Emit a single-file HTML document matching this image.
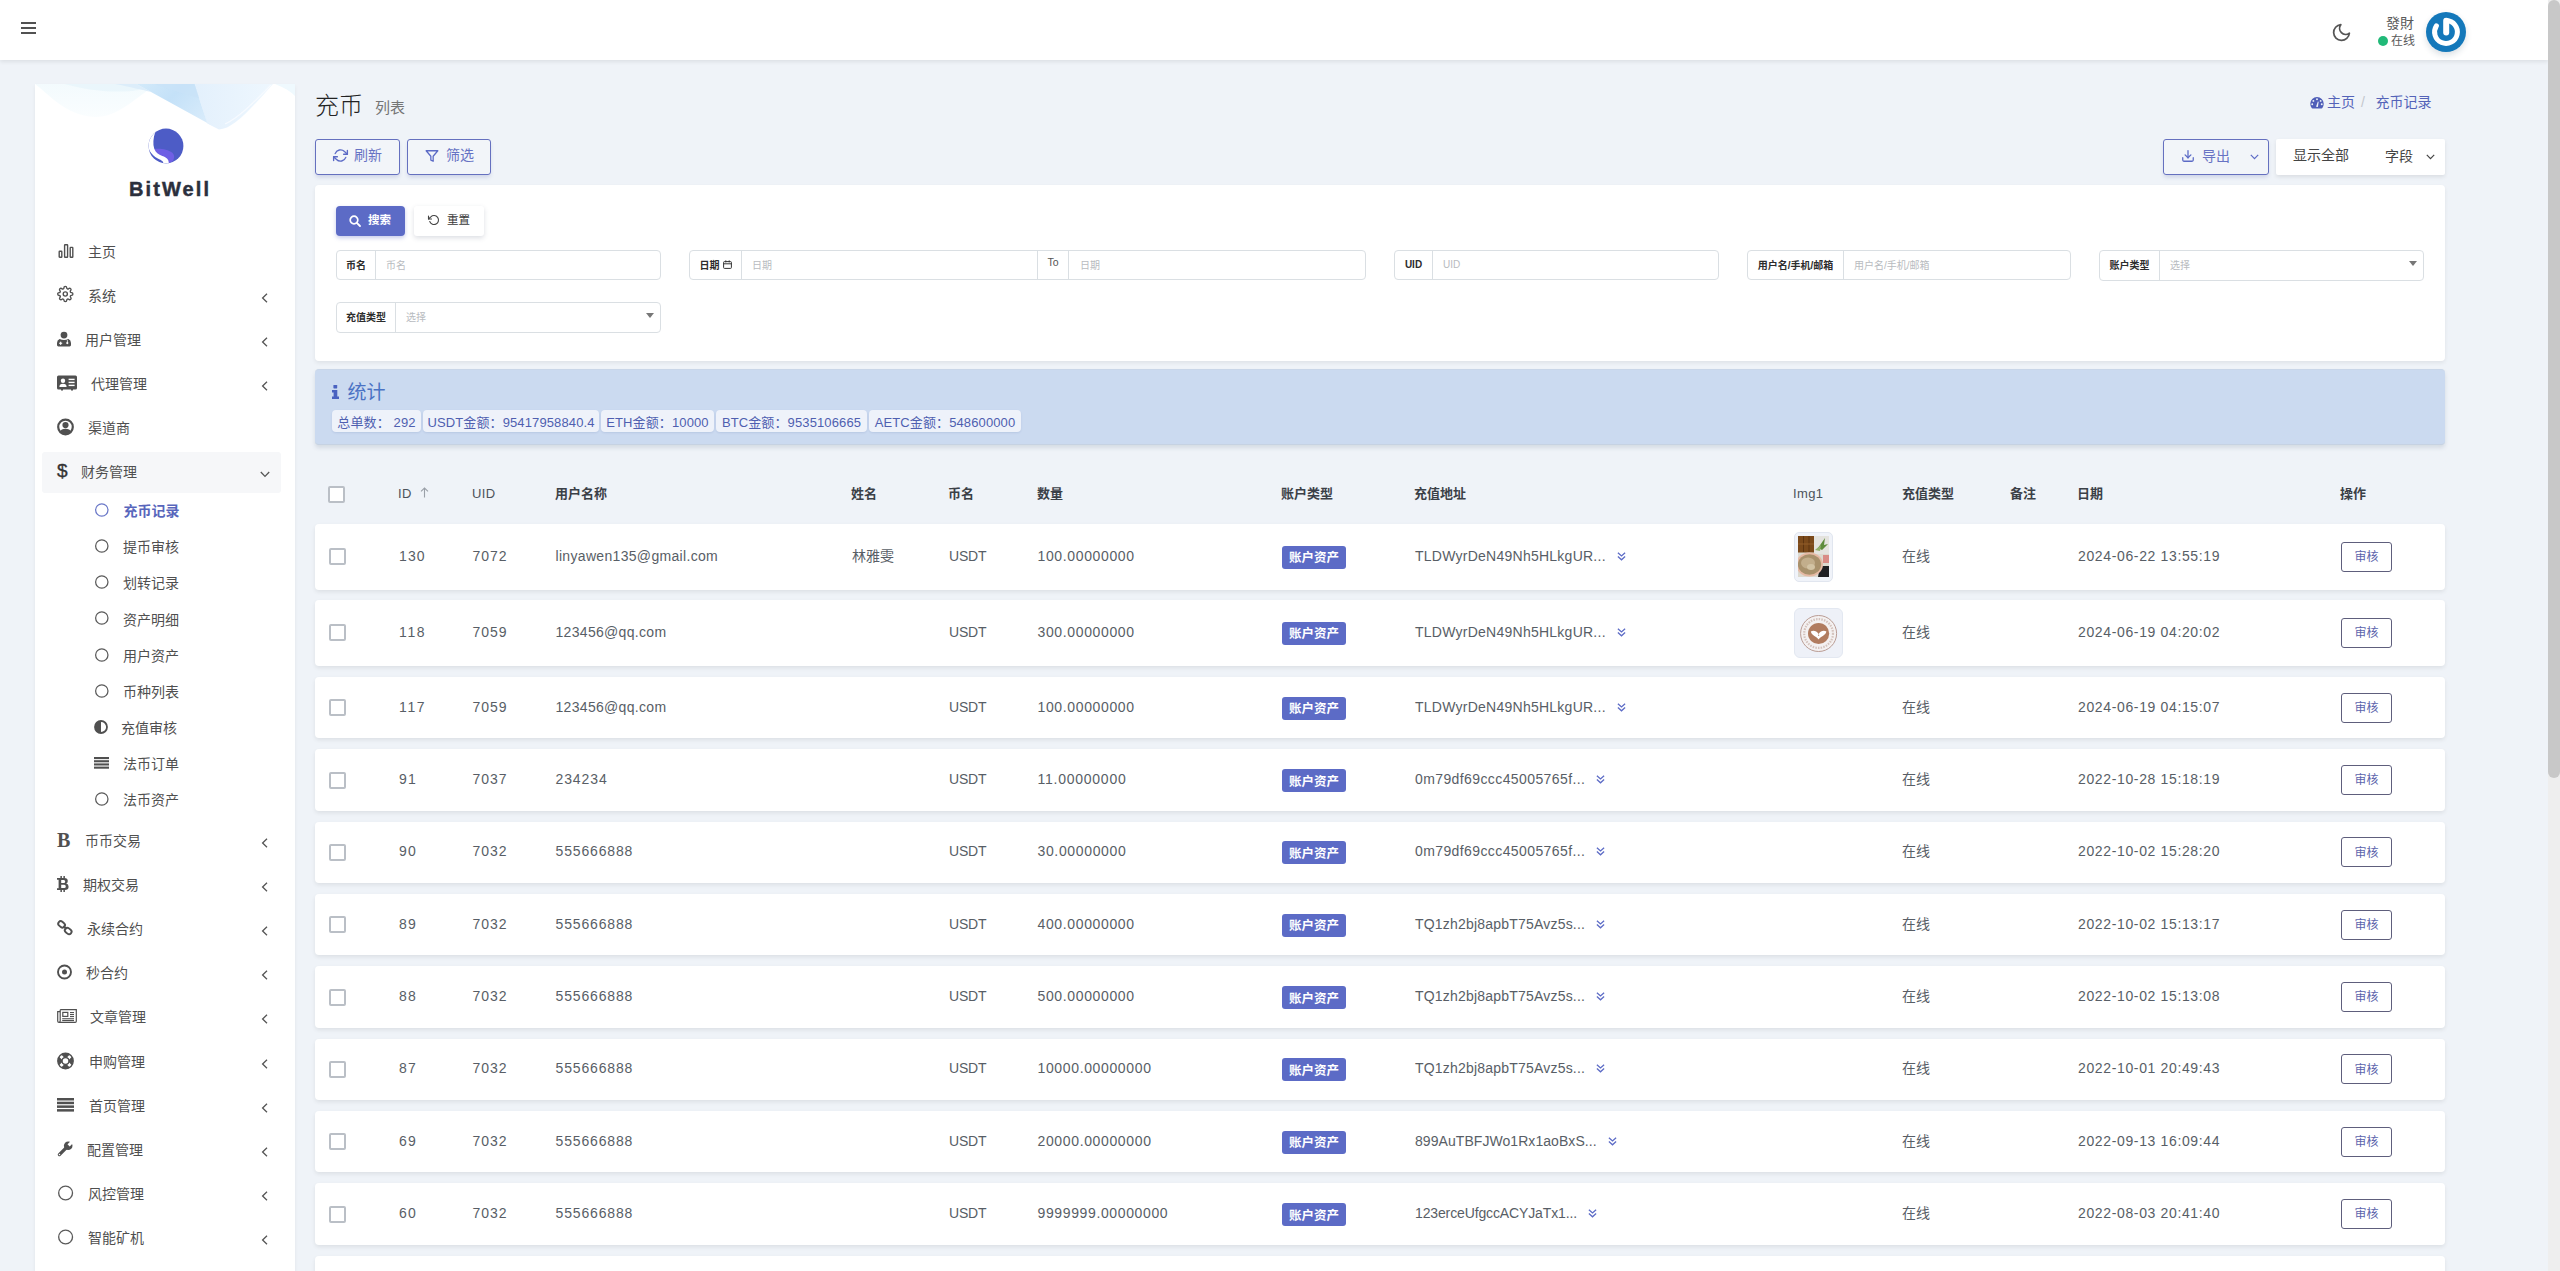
<!DOCTYPE html>
<html lang="zh-CN">
<head>
<meta charset="utf-8">
<title>充币记录</title>
<style>
*{box-sizing:border-box;margin:0;padding:0}
html,body{width:2560px;height:1271px;overflow:hidden}
body{background:#eff3f8;font-family:"Liberation Sans","Noto Sans CJK SC",sans-serif;font-size:14px;color:#414750;position:relative}
svg{display:block;overflow:visible}
.a{position:absolute}
.t{position:absolute;white-space:nowrap;line-height:20px;transform:translateY(-50%)}
#nav{position:absolute;left:0;top:0;width:2548px;height:60px;background:#fff;box-shadow:0 2px 4px 0 rgba(0,0,0,.08);z-index:5}
#sbtrack{position:absolute;left:2548px;top:0;width:12px;height:1271px;background:#eeeeee;z-index:9}
#sbthumb{position:absolute;left:2548px;top:0;width:12px;height:778px;background:#c8c8c8;border-radius:6px;z-index:10}
#side{position:absolute;left:35px;top:84px;width:260px;height:1200px;background:#fff;box-shadow:0 2px 4px 0 rgba(0,0,0,.06);overflow:hidden}
.m{font-size:14px;color:#4f4f4f}
.btn{position:absolute;border-radius:3px;font-size:14px;white-space:nowrap}
.btn-o{border:1px solid #6570bf;color:#6773c4;background:rgba(255,255,255,.22);box-shadow:0 3px 4px -1px rgba(88,100,170,.24)}
.panel{position:absolute;background:#fff;border-radius:4px;box-shadow:0 2px 4px 0 rgba(0,0,0,.07)}
.ig{position:absolute;height:30px;border:1px solid #dadfe3;border-radius:4px;background:#fff;font-size:10px}
.ig .lb{position:absolute;left:0;top:0;padding-bottom:2px;height:28px;display:flex;align-items:center;justify-content:center;font-weight:bold;color:#2c2c2c;border-right:1px solid #dadfe3;white-space:nowrap}
.ig .ph{position:absolute;top:0;padding-bottom:2px;height:28px;display:flex;align-items:center;color:#b8bbc0;white-space:nowrap}
.ig .caret{position:absolute;right:6px;top:11px;width:0;height:0;border-left:4px solid transparent;border-right:4px solid transparent;border-top:5px solid #777}
.th{position:absolute;white-space:nowrap;line-height:20px;transform:translateY(-50%);top:494px;font-size:13px;font-weight:bold;color:#3b4047}
.th.l{font-weight:normal;color:#4d535b;letter-spacing:.4px;top:493.5px}
.row{position:absolute;left:315px;width:2130px;background:#fff;border-radius:4px;box-shadow:0 2px 4px 0 rgba(0,0,0,.08)}
.row .c{position:absolute;top:calc(50% - 1px);transform:translateY(-50%);font-size:14px;color:#585e66;white-space:nowrap;line-height:20px}
.cb{position:absolute;width:17px;height:17px;border:2px solid #babfc6;border-radius:2px;background:#fff}
.badge{position:absolute;left:967px;width:64px;height:23px;border-radius:3px;background:#5c6bc6;color:#fff;font-size:12.5px;font-weight:bold;display:flex;align-items:center;justify-content:center;top:50%;margin-top:-11px;padding-bottom:1px}
.act{position:absolute;left:2026px;width:51px;height:30px;border:1px solid #5e5e7c;border-radius:3px;color:#5c64ac;font-size:12px;display:flex;align-items:center;justify-content:center;top:50%;margin-top:-15px;padding-bottom:2.5px;background:#fff}
.dd{position:absolute;top:50%;margin-top:-5px}
.stat{position:absolute;top:410px;height:22px;background:#eef2fa;border-radius:4px;font-size:13px;letter-spacing:.12px;color:#4f5fb0;display:flex;align-items:center;justify-content:center;white-space:nowrap;box-shadow:0 1px 2px rgba(80,100,160,.15)}
</style>
</head>
<body>
<div id="nav"><div class="a" style="left:21px;top:22px;width:14.5px;height:2px;background:#525252"></div><div class="a" style="left:21px;top:27px;width:14.5px;height:2px;background:#525252"></div><div class="a" style="left:21px;top:32px;width:14.5px;height:2px;background:#525252"></div><div class="a" style="left:2330.5px;top:21.5px"><svg width="21" height="21" viewBox="0 0 24 24" style=""><path d="M21 12.79A9 9 0 1 1 11.21 3 7 7 0 0 0 21 12.79z" fill="none" stroke="#555" stroke-width="2" stroke-linejoin="round"/></svg></div><div class="t" style="left:2386px;top:23px;font-size:14px;color:#5a5a5a;font-family:'Liberation Sans','Noto Sans CJK TC',sans-serif">發財</div><div class="a" style="left:2378px;top:36px;width:10px;height:10px;border-radius:50%;background:#21b978"></div><div class="t" style="left:2391px;top:41px;font-size:12px;color:#5a5a5a">在线</div><div class="a" style="left:2426px;top:12px;width:40px;height:40px;border-radius:50%;background:#1478ba;box-shadow:0 3px 6px rgba(30,60,90,.16)"><svg width="40" height="40" viewBox="0 0 40 40" style=""><path d="M20.4 8.6A11.4 11.4 0 1 1 10.4 13.8" fill="none" stroke="#fff" stroke-width="5" stroke-linecap="round"/><path d="M20.2 8.8V20.4" stroke="#fff" stroke-width="6" stroke-linecap="round"/></svg></div></div>
<div id="side"><svg class="a" style="left:0;top:0" width="260" height="60" viewBox="0 0 260 60">
<defs>
<linearGradient id="wg1" x1="0" y1="0" x2="1" y2="0.55"><stop offset="0" stop-color="#d3eafa"/><stop offset=".45" stop-color="#c4e1f8"/><stop offset="1" stop-color="#d9ecfb"/></linearGradient>
<linearGradient id="wg2" x1="0" y1="0" x2="1" y2="0"><stop offset="0" stop-color="#e3f0fc"/><stop offset="1" stop-color="#eef7fe"/></linearGradient>
<linearGradient id="wg3" x1="0" y1="0" x2="0" y2="1"><stop offset="0" stop-color="#e9f7fc"/><stop offset="1" stop-color="#f6fcfe"/></linearGradient>
</defs>
<path d="M0 0C12 8 30 32 60 33C84 33 100 14 122 0Z" fill="url(#wg3)" opacity=".55"/>
<path d="M30 0C50 6 80 10 104 6L101 0Z" fill="#e2f3fa" opacity=".55"/>
<path d="M200 0H260V12C252 4 246 3 240 0Z" fill="#eff9fe"/>
<path d="M159 0L166 20L172 39L184 45.6C198 45 214 27 238 0Z" fill="url(#wg2)"/>
<path d="M80 0C95 3 108 6 116 8L101.5 0Z" fill="#dcedfa"/>
<path d="M101.5 0H159.5L166 20L172.5 39.5L184 45.6L176 41Z" fill="url(#wg1)"/>
<path d="M120 0H159.5L164 14C150 10 135 6 120 0Z" fill="#c9e3f8" opacity=".7"/>
<path d="M190 40C205 33 222 15 236 1" fill="none" stroke="#f7fbff" stroke-width="1.2" opacity=".9"/>
</svg><div class="a" style="left:112.5px;top:44.4px"><svg width="36" height="36" viewBox="0 0 36 36"><defs><clipPath id="lc"><circle cx="18" cy="18" r="17.4"/></clipPath></defs>
<circle cx="18" cy="18" r="17.4" fill="#4d5cc6"/>
<g clip-path="url(#lc)">
<path d="M6.5 21C12 20 20 21.5 24 24.5C26.4 26.6 26.8 29 25 33L20 36C20.5 31.5 18 30 14 28.5C10 27 7 25 6.5 21Z" fill="#6f5fe4"/>
<path d="M7.2 4.2C5.2 10 4.8 16 6.2 20.6C7.6 24.6 10.4 26.6 14.4 28C18.6 29.6 21 31.4 20.8 35.6L15 36C16.2 33.6 13.6 32.2 9.8 30.4C3.8 27.4 0 22 0 16C0 10 3 7 7.2 4.2Z" fill="#fff"/>
</g></svg></div><div class="t" style="left:94px;top:105px;font-size:20px;font-weight:bold;color:#2b303d;letter-spacing:2.1px;-webkit-text-stroke:.45px #2b303d">BitWell</div><div class="a" style="left:7px;top:368.4px;width:239px;height:40.4px;background:#f6f7f9;border-radius:3px"></div><div class="a" style="left:22.6px;top:166.7px;transform:translateY(-50%)"><svg width="16" height="14" viewBox="0 0 16 14" style=""><g fill="none" stroke="#505050" stroke-width="1.4" stroke-linejoin="round"><rect x="1.2" y="7.2" width="2.6" height="6" rx=".5"/><rect x="6.6" y=".8" width="3" height="12.4" rx=".5"/><rect x="12.2" y="3.4" width="2.6" height="9.8" rx=".5"/></g></svg></div><div class="t m" style="left:53px;top:168px">主页</div><div class="a" style="left:22px;top:210.2px;transform:translateY(-50%)"><svg width="16.6" height="16.6" viewBox="0 0 24 24" style=""><g fill="none" stroke="#505050" stroke-width="2" stroke-linecap="round" stroke-linejoin="round"><circle cx="12" cy="12" r="3"/><path d="M19.4 15a1.65 1.65 0 0 0 .33 1.82l.06.06a2 2 0 0 1 0 2.83 2 2 0 0 1-2.83 0l-.06-.06a1.65 1.65 0 0 0-1.82-.33 1.65 1.65 0 0 0-1 1.51V21a2 2 0 0 1-2 2 2 2 0 0 1-2-2v-.09A1.65 1.65 0 0 0 9 19.4a1.65 1.65 0 0 0-1.82.33l-.06.06a2 2 0 0 1-2.83 0 2 2 0 0 1 0-2.83l.06-.06a1.65 1.65 0 0 0 .33-1.82 1.65 1.65 0 0 0-1.51-1H3a2 2 0 0 1-2-2 2 2 0 0 1 2-2h.09A1.65 1.65 0 0 0 4.6 9a1.65 1.65 0 0 0-.33-1.82l-.06-.06a2 2 0 0 1 0-2.83 2 2 0 0 1 2.83 0l.06.06a1.65 1.65 0 0 0 1.82.33H9a1.65 1.65 0 0 0 1-1.51V3a2 2 0 0 1 2-2 2 2 0 0 1 2 2v.09a1.65 1.65 0 0 0 1 1.51 1.65 1.65 0 0 0 1.82-.33l.06-.06a2 2 0 0 1 2.83 0 2 2 0 0 1 0 2.83l-.06.06a1.65 1.65 0 0 0-.33 1.82V9a1.65 1.65 0 0 0 1.51 1H21a2 2 0 0 1 2 2 2 2 0 0 1-2 2h-.09a1.65 1.65 0 0 0-1.51 1z"/></g></svg></div><div class="t m" style="left:53px;top:212px">系统</div><div class="a" style="left:226px;top:208.8px"><svg width="7" height="10" viewBox="0 0 7 10" style=""><path d="M6 .8 1.6 5 6 9.2" fill="none" stroke="#555" stroke-width="1.3"/></svg></div><div class="a" style="left:22px;top:255px;transform:translateY(-50%)"><svg width="14" height="15" viewBox="0 0 14 15" style=""><g fill="#505050"><circle cx="7" cy="3.6" r="3.4"/><path d="M2.6 7.6 Q7 9.6 11.4 7.6 Q14 8.6 14 11.5 V13.6 Q14 15 12.6 15 H1.4 Q0 15 0 13.6 V11.5 Q0 8.6 2.6 7.6Z"/></g><g fill="#fff"><rect x="3.1" y="10.2" width="1.1" height="3.2"/><rect x="2.1" y="11.2" width="3.1" height="1.1"/><circle cx="10.3" cy="11.6" r="1.1"/><rect x="9.9" y="8.6" width=".8" height="2.4"/></g></svg></div><div class="t m" style="left:50px;top:256px">用户管理</div><div class="a" style="left:226px;top:252.8px"><svg width="7" height="10" viewBox="0 0 7 10" style=""><path d="M6 .8 1.6 5 6 9.2" fill="none" stroke="#555" stroke-width="1.3"/></svg></div><div class="a" style="left:22px;top:299px;transform:translateY(-50%)"><svg width="20" height="15" viewBox="0 0 20 15" style=""><path fill="#505050" d="M1.5 0H18.5A1.5 1.5 0 0 1 20 1.5V12.5A1.5 1.5 0 0 1 18.5 14H16V15H14V14H6V15H4V14H1.5A1.5 1.5 0 0 1 0 12.5V1.5A1.5 1.5 0 0 1 1.5 0Z"/><g fill="#fff"><circle cx="6" cy="5.2" r="2.2"/><path d="M2.4 11.4Q2.4 8.2 6 8.2Q9.6 8.2 9.6 11.4Z"/><rect x="11.6" y="3.2" width="6" height="1.4"/><rect x="11.6" y="6.2" width="6" height="1.4"/><rect x="11.6" y="9.2" width="6" height="1.4"/></g></svg></div><div class="t m" style="left:56px;top:300px">代理管理</div><div class="a" style="left:226px;top:296.8px"><svg width="7" height="10" viewBox="0 0 7 10" style=""><path d="M6 .8 1.6 5 6 9.2" fill="none" stroke="#555" stroke-width="1.3"/></svg></div><div class="a" style="left:22px;top:343px;transform:translateY(-50%)"><svg width="17" height="17" viewBox="0 0 17 17" style=""><circle cx="8.5" cy="8.5" r="7.3" fill="none" stroke="#505050" stroke-width="2.2"/><circle cx="8.5" cy="6.6" r="3.1" fill="#505050"/><path fill="#505050" d="M2.8 13.4Q4.2 10.2 8.5 10.2Q12.8 10.2 14.2 13.4Q11.8 16.2 8.5 16.2Q5.2 16.2 2.8 13.4Z"/></svg></div><div class="t m" style="left:53px;top:344px">渠道商</div><div class="a" style="left:22px;top:387px;transform:translateY(-50%)"><span style="display:block;font:normal 19px/19px 'Liberation Sans',sans-serif;color:#333;-webkit-text-stroke:.35px #333;margin-top:-1px">$</span></div><div class="t m" style="left:46px;top:388px">财务管理</div><div class="a" style="left:225px;top:387px"><svg width="10" height="7" viewBox="0 0 10 7" style=""><path d="M.8 1 5 5.4 9.2 1" fill="none" stroke="#555" stroke-width="1.3"/></svg></div><div class="a" style="left:22px;top:756px;transform:translateY(-50%)"><span style="display:block;font:bold 20px/20px 'Liberation Serif',serif;color:#505050">B</span></div><div class="t m" style="left:50px;top:757px">币币交易</div><div class="a" style="left:226px;top:753.8px"><svg width="7" height="10" viewBox="0 0 7 10" style=""><path d="M6 .8 1.6 5 6 9.2" fill="none" stroke="#555" stroke-width="1.3"/></svg></div><div class="a" style="left:22px;top:800px;transform:translateY(-50%)"><svg width="12" height="16" viewBox="0 0 12 16" style=""><g fill="#505050"><rect x="3.4" y="0" width="1.5" height="2.4"/><rect x="6.4" y="0" width="1.5" height="2.4"/><rect x="3.4" y="13.6" width="1.5" height="2.4"/><rect x="6.4" y="13.6" width="1.5" height="2.4"/></g><path fill="#505050" d="M0 2H7.4Q10.8 2 10.8 5Q10.8 7 9.2 7.6Q11.6 8.2 11.6 10.8Q11.6 14 7.8 14H0V12.2H1.6V3.8H0ZM4.2 3.9V7H6.8Q8.2 7 8.2 5.4Q8.2 3.9 6.8 3.9ZM4.2 8.8V12.1H7.2Q8.8 12.1 8.8 10.4Q8.8 8.8 7.2 8.8Z" fill-rule="evenodd"/></svg></div><div class="t m" style="left:48px;top:801px">期权交易</div><div class="a" style="left:226px;top:797.8px"><svg width="7" height="10" viewBox="0 0 7 10" style=""><path d="M6 .8 1.6 5 6 9.2" fill="none" stroke="#555" stroke-width="1.3"/></svg></div><div class="a" style="left:22px;top:844px;transform:translateY(-50%)"><svg width="16" height="16" viewBox="0 0 16 16" style=""><g fill="none" stroke="#505050" stroke-width="1.9"><rect x="-3.6" y="-2.5" width="7.2" height="5" rx="2.5" transform="translate(4.6 4.4) rotate(40)"/><rect x="-3.6" y="-2.5" width="7.2" height="5" rx="2.5" transform="translate(11.2 11) rotate(40)"/></g><path d="M6.4 6 L9.6 9.2" stroke="#505050" stroke-width="1.9"/></svg></div><div class="t m" style="left:52px;top:845px">永续合约</div><div class="a" style="left:226px;top:841.8px"><svg width="7" height="10" viewBox="0 0 7 10" style=""><path d="M6 .8 1.6 5 6 9.2" fill="none" stroke="#555" stroke-width="1.3"/></svg></div><div class="a" style="left:22px;top:888px;transform:translateY(-50%)"><svg width="15" height="15" viewBox="0 0 15 15" style=""><circle cx="7.5" cy="7.5" r="6.5" fill="none" stroke="#505050" stroke-width="1.9"/><circle cx="7.5" cy="7.5" r="2.5" fill="#505050"/></svg></div><div class="t m" style="left:51px;top:889px">秒合约</div><div class="a" style="left:226px;top:885.8px"><svg width="7" height="10" viewBox="0 0 7 10" style=""><path d="M6 .8 1.6 5 6 9.2" fill="none" stroke="#555" stroke-width="1.3"/></svg></div><div class="a" style="left:22px;top:932px;transform:translateY(-50%)"><svg width="20" height="14" viewBox="0 0 20 14" style=""><g fill="none" stroke="#505050" stroke-width="1.2"><path d="M3.2 .7H19.3V12.2Q19.3 13.3 18.2 13.3H2Q.7 13.3 .7 12V2.6H3.2"/><path d="M3.2 .7V12Q3.2 13.3 2 13.3"/><rect x="5.8" y="3.4" width="5" height="4"/></g><g fill="#505050"><rect x="13" y="3" width="4" height="1.1"/><rect x="13" y="5" width="4" height="1.1"/><rect x="13" y="7" width="4" height="1.1"/><rect x="5.2" y="9.2" width="11.8" height="1.1"/><rect x="5.2" y="11" width="11.8" height="1.1"/></g></svg></div><div class="t m" style="left:55px;top:933px">文章管理</div><div class="a" style="left:226px;top:929.8px"><svg width="7" height="10" viewBox="0 0 7 10" style=""><path d="M6 .8 1.6 5 6 9.2" fill="none" stroke="#555" stroke-width="1.3"/></svg></div><div class="a" style="left:22px;top:977px;transform:translateY(-50%)"><svg width="17" height="17" viewBox="0 0 17 17" style=""><circle cx="8.5" cy="8.5" r="5.6" fill="none" stroke="#505050" stroke-width="4.2"/><g stroke="#fff" stroke-width="3"><path d="M2.4 2.4 5.9 5.9M14.6 2.4 11.1 5.9M2.4 14.6 5.9 11.1M14.6 14.6 11.1 11.1"/></g><circle cx="8.5" cy="8.5" r="7.7" fill="none" stroke="#505050" stroke-width="1.4"/><circle cx="8.5" cy="8.5" r="3.4" fill="none" stroke="#505050" stroke-width="1.3"/></svg></div><div class="t m" style="left:54px;top:978px">申购管理</div><div class="a" style="left:226px;top:974.8px"><svg width="7" height="10" viewBox="0 0 7 10" style=""><path d="M6 .8 1.6 5 6 9.2" fill="none" stroke="#555" stroke-width="1.3"/></svg></div><div class="a" style="left:22px;top:1021px;transform:translateY(-50%)"><svg width="17" height="14" viewBox="0 0 17 14" style=""><g fill="#505050"><rect x="0" y="0" width="17" height="2.5"/><rect x="0" y="3.7" width="17" height="2.5"/><rect x="0" y="7.4" width="17" height="2.5"/><rect x="0" y="11.1" width="17" height="2.5"/></g></svg></div><div class="t m" style="left:54px;top:1022px">首页管理</div><div class="a" style="left:226px;top:1018.8px"><svg width="7" height="10" viewBox="0 0 7 10" style=""><path d="M6 .8 1.6 5 6 9.2" fill="none" stroke="#555" stroke-width="1.3"/></svg></div><div class="a" style="left:22px;top:1065px;transform:translateY(-50%)"><svg width="16" height="16" viewBox="0 0 16 16" style=""><path d="M2.4 13.6 9.6 6.4" stroke="#505050" stroke-width="3.3" stroke-linecap="round"/><circle cx="11.2" cy="4.8" r="4.3" fill="#505050"/><path d="M11.6 4.4 16.5 -.5" stroke="#fff" stroke-width="3.1"/><circle cx="2.5" cy="13.5" r=".75" fill="#fff"/></svg></div><div class="t m" style="left:52px;top:1066px">配置管理</div><div class="a" style="left:226px;top:1062.8px"><svg width="7" height="10" viewBox="0 0 7 10" style=""><path d="M6 .8 1.6 5 6 9.2" fill="none" stroke="#555" stroke-width="1.3"/></svg></div><div class="a" style="left:22.799999999999997px;top:1109px;transform:translateY(-50%)"><svg width="15.2" height="15.2" viewBox="0 0 15.2 15.2" style=""><circle cx="7.6" cy="7.6" r="6.925" fill="none" stroke="#5a5a5a" stroke-width="1.35"/></svg></div><div class="t m" style="left:53px;top:1110px">风控管理</div><div class="a" style="left:226px;top:1106.8px"><svg width="7" height="10" viewBox="0 0 7 10" style=""><path d="M6 .8 1.6 5 6 9.2" fill="none" stroke="#555" stroke-width="1.3"/></svg></div><div class="a" style="left:22.799999999999997px;top:1153px;transform:translateY(-50%)"><svg width="15.2" height="15.2" viewBox="0 0 15.2 15.2" style=""><circle cx="7.6" cy="7.6" r="6.925" fill="none" stroke="#5a5a5a" stroke-width="1.35"/></svg></div><div class="t m" style="left:53px;top:1154px">智能矿机</div><div class="a" style="left:226px;top:1150.8px"><svg width="7" height="10" viewBox="0 0 7 10" style=""><path d="M6 .8 1.6 5 6 9.2" fill="none" stroke="#555" stroke-width="1.3"/></svg></div><div class="a" style="left:59.8px;top:426.0px;transform:translateY(-50%)"><svg width="13.6" height="13.6" viewBox="0 0 13.6 13.6" style=""><circle cx="6.8" cy="6.8" r="6.175" fill="none" stroke="#6a78c8" stroke-width="1.25"/></svg></div><div class="t m" style="left:88.4px;top:427.09999999999997px;font-weight:bold;color:#5866bc">充币记录</div><div class="a" style="left:60px;top:462.1px;transform:translateY(-50%)"><svg width="13.6" height="13.6" viewBox="0 0 13.6 13.6" style=""><circle cx="6.8" cy="6.8" r="6.175" fill="none" stroke="#5a5a5a" stroke-width="1.25"/></svg></div><div class="t m" style="left:88px;top:463.20000000000005px;">提币审核</div><div class="a" style="left:60px;top:498.30000000000007px;transform:translateY(-50%)"><svg width="13.6" height="13.6" viewBox="0 0 13.6 13.6" style=""><circle cx="6.8" cy="6.8" r="6.175" fill="none" stroke="#5a5a5a" stroke-width="1.25"/></svg></div><div class="t m" style="left:88px;top:499.4000000000001px;">划转记录</div><div class="a" style="left:60px;top:534.4px;transform:translateY(-50%)"><svg width="13.6" height="13.6" viewBox="0 0 13.6 13.6" style=""><circle cx="6.8" cy="6.8" r="6.175" fill="none" stroke="#5a5a5a" stroke-width="1.25"/></svg></div><div class="t m" style="left:88px;top:535.5px;">资产明细</div><div class="a" style="left:60px;top:570.5px;transform:translateY(-50%)"><svg width="13.6" height="13.6" viewBox="0 0 13.6 13.6" style=""><circle cx="6.8" cy="6.8" r="6.175" fill="none" stroke="#5a5a5a" stroke-width="1.25"/></svg></div><div class="t m" style="left:88px;top:571.6px;">用户资产</div><div class="a" style="left:60px;top:606.7px;transform:translateY(-50%)"><svg width="13.6" height="13.6" viewBox="0 0 13.6 13.6" style=""><circle cx="6.8" cy="6.8" r="6.175" fill="none" stroke="#5a5a5a" stroke-width="1.25"/></svg></div><div class="t m" style="left:88px;top:607.8000000000001px;">币种列表</div><div class="a" style="left:58.5px;top:642.8000000000001px;transform:translateY(-50%)"><svg width="14" height="14" viewBox="0 0 14 14" style=""><circle cx="7" cy="7" r="6" fill="none" stroke="#505050" stroke-width="1.8"/><path d="M7 1A6 6 0 0 0 7 13Z" fill="#505050"/></svg></div><div class="t m" style="left:86px;top:643.9000000000001px;">充值审核</div><div class="a" style="left:59px;top:678.9px;transform:translateY(-50%)"><svg width="15" height="12" viewBox="0 0 15 12" style=""><g fill="#505050"><rect x="0" y="0" width="15" height="2.1"/><rect x="0" y="3.2" width="15" height="2.1"/><rect x="0" y="6.4" width="15" height="2.1"/><rect x="0" y="9.6" width="15" height="2.1"/></g></svg></div><div class="t m" style="left:88px;top:680.0px;">法币订单</div><div class="a" style="left:60px;top:715.0px;transform:translateY(-50%)"><svg width="13.6" height="13.6" viewBox="0 0 13.6 13.6" style=""><circle cx="6.8" cy="6.8" r="6.175" fill="none" stroke="#5a5a5a" stroke-width="1.25"/></svg></div><div class="t m" style="left:88px;top:716.1px;">法币资产</div></div>
<div class="t" style="left:315px;top:105.6px;font-size:24px;font-weight:300;color:#222;line-height:30px">充币</div><div class="t" style="left:375px;top:108px;font-size:15px;color:#757575">列表</div><div class="a" style="left:2309.8px;top:97px"><svg width="14" height="11.4" viewBox="0 0 13 11" style=""><path fill="#4f5eb8" d="M6.5 0A6.5 6.5 0 0 0 0 6.5 6.4 6.4 0 0 0 1.2 10.3Q1.5 11 2.2 11H10.8Q11.5 11 11.8 10.3A6.4 6.4 0 0 0 13 6.5 6.5 6.5 0 0 0 6.5 0Z"/><g fill="#eff3f8"><circle cx="6.5" cy="2.2" r=".9"/><circle cx="3" cy="3.8" r=".9"/><circle cx="10" cy="3.8" r=".9"/><circle cx="1.9" cy="7" r=".9"/><circle cx="11.1" cy="7" r=".9"/><path d="M5.6 9.3 7.3 4.4 8.1 4.7 7.4 9.6Z"/></g></svg></div><div class="t" style="left:2327px;top:102px;font-size:14px;color:#5463b8">主页</div><div class="t" style="left:2361px;top:102px;font-size:14px;color:#c3c7cd">/</div><div class="t" style="left:2375.5px;top:102px;font-size:14px;color:#5463b8">充币记录</div><div class="btn btn-o" style="left:315px;top:139px;width:85px;height:36px"><div class="a" style="left:17px;top:8px"><svg width="15" height="15" viewBox="0 0 24 24" style=""><g fill="none" stroke="#5c6bc6" stroke-width="2.2" stroke-linecap="round" stroke-linejoin="round"><polyline points="23 4 23 10 17 10"/><polyline points="1 20 1 14 7 14"/><path d="M3.51 9a9 9 0 0 1 14.85-3.36L23 10M1 14l4.64 4.36A9 9 0 0 0 20.49 15"/></g></svg></div><div class="t" style="left:38px;top:15px">刷新</div></div><div class="btn btn-o" style="left:407px;top:139px;width:84px;height:36px"><div class="a" style="left:17px;top:8.5px"><svg width="14" height="14" viewBox="0 0 24 24" style=""><polygon points="22 3 2 3 10 12.46 10 19 14 21 14 12.46 22 3" fill="none" stroke="#5c6bc6" stroke-width="2.2" stroke-linejoin="round"/></svg></div><div class="t" style="left:38px;top:15px">筛选</div></div><div class="btn btn-o" style="left:2163px;top:139px;width:105.5px;height:36px"><div class="a" style="left:17px;top:9px"><svg width="14" height="14" viewBox="0 0 24 24" style=""><g fill="none" stroke="#5c6bc6" stroke-width="2.2" stroke-linecap="round" stroke-linejoin="round"><path d="M21 15v4a2 2 0 0 1-2 2H5a2 2 0 0 1-2-2v-4"/><polyline points="7 10 12 15 17 10"/><line x1="12" y1="15" x2="12" y2="3"/></g></svg></div><div class="t" style="left:38px;top:16px">导出</div><div class="a" style="left:86px;top:14px"><svg width="9" height="6" viewBox="0 0 9 6" style=""><path d="M.8 .8 4.5 4.6 8.2 .8" fill="none" stroke="#5c6bc6" stroke-width="1.2"/></svg></div></div><div class="a" style="left:2276px;top:139px;width:169px;height:36px;background:#fff;border-radius:2px;box-shadow:0 2px 4px rgba(0,0,0,.09)"><div class="t" style="left:17px;top:16px;font-size:14px;color:#444">显示全部</div><div class="t" style="left:109px;top:17px;font-size:14px;color:#444">字段</div><div class="a" style="left:150px;top:15px"><svg width="9" height="6" viewBox="0 0 9 6" style=""><path d="M.8 .8 4.5 4.6 8.2 .8" fill="none" stroke="#444" stroke-width="1.2"/></svg></div></div><div class="panel" style="left:315px;top:185px;width:2130px;height:176px"></div><div class="btn" style="left:336px;top:206px;width:69px;height:30px;background:#5c6bc6;color:#fff;font-weight:bold;font-size:11.5px;border-radius:4px;box-shadow:0 2px 4px rgba(92,107,198,.35)"><div class="a" style="left:13px;top:8.5px"><svg width="12" height="12" viewBox="0 0 12 12" style=""><circle cx="5" cy="5" r="3.8" fill="none" stroke="#fff" stroke-width="1.7"/><path d="M7.8 7.8 11 11" stroke="#fff" stroke-width="1.8" stroke-linecap="round"/></svg></div><div class="t" style="left:32px;top:14px">搜索</div></div><div class="btn" style="left:414px;top:206px;width:70px;height:30px;background:#fff;color:#3a3a3a;font-size:11.5px;border-radius:3px;box-shadow:0 2px 5px rgba(60,70,100,.18)"><div class="a" style="left:14px;top:8px"><svg width="12" height="12" viewBox="0 0 24 24" style=""><g fill="none" stroke="#444" stroke-width="2.2" stroke-linecap="round" stroke-linejoin="round"><polyline points="1 4 1 10 7 10"/><path d="M3.51 15a9 9 0 1 0 2.13-9.36L1 10"/></g></svg></div><div class="t" style="left:33px;top:14px">重置</div></div><div class="ig" style="left:336px;top:250px;width:325px;height:30px"><div class="lb" style="width:39px;height:28px">币名</div><div class="ph" style="left:49px;height:28px">币名</div></div><div class="ig" style="left:689px;top:250px;width:677px;height:30px"><div class="lb" style="width:52px;height:28px"><span>日期</span><span style="margin-left:3px"><svg width="9" height="9" viewBox="0 0 9 9" style=""><rect x=".6" y="1.6" width="7.8" height="6.8" rx=".8" fill="none" stroke="#333" stroke-width="1"/><path d="M.6 3.8H8.4M2.8 .4V2.4M6.2 .4V2.4" stroke="#333" stroke-width="1"/></svg></span></div><div class="ph" style="left:62px;height:28px">日期</div><div class="a" style="left:347px;top:0;width:32px;height:28px;border-left:1px solid #dadfe3;border-right:1px solid #dadfe3;font-size:10.5px;color:#555;display:flex;justify-content:center;padding-top:5px">To</div><div class="ph" style="left:390px">日期</div></div><div class="ig" style="left:1394px;top:250px;width:325px;height:30px"><div class="lb" style="width:38px;height:28px">UID</div><div class="ph" style="left:48px;height:28px">UID</div></div><div class="ig" style="left:1747px;top:250px;width:324px;height:30px"><div class="lb" style="width:96px;height:28px">用户名/手机/邮箱</div><div class="ph" style="left:106px;height:28px">用户名/手机/邮箱</div></div><div class="ig" style="left:2099px;top:250px;width:325px;height:31px"><div class="lb" style="width:60px;height:29px">账户类型</div><div class="ph" style="left:70px;height:29px">选择</div><div class="caret" style="top:10px"></div></div><div class="ig" style="left:336px;top:302px;width:325px;height:31px"><div class="lb" style="width:59px;height:29px">充值类型</div><div class="ph" style="left:69px;height:29px">选择</div><div class="caret" style="top:10px"></div></div><div class="a" style="left:315px;top:369px;width:2130px;height:76px;background:#cbdaf0;border-radius:4px;border-top:1px solid #c9d6e8;border-bottom:1px solid #c6d2e2;box-shadow:0 3px 4px rgba(40,60,90,.13)"></div><div class="a" style="left:332px;top:385px"><svg width="7" height="14" viewBox="0 0 7 14" style=""><g fill="#4a62c0"><rect x="1.4" y="0" width="3.8" height="3.4" rx=".6"/><path d="M0 5H5.3V11.6H7V14H0V11.6H1.6V7.4H0Z"/></g></svg></div><div class="t" style="left:347.5px;top:393px;font-size:19px;color:#4a72c4;line-height:24px">统计</div><div class="stat" style="left:332px;width:89px">总单数：&nbsp;292</div><div class="stat" style="left:423px;width:176px">USDT金额：95417958840.4</div><div class="stat" style="left:601px;width:113px">ETH金额：10000</div><div class="stat" style="left:716px;width:151px">BTC金额：9535106665</div><div class="stat" style="left:869px;width:152px">AETC金额：548600000</div><div class="cb" style="left:328px;top:486px"></div><div class="th l" style="left:398px">ID</div><div class="a" style="left:420px;top:487px"><svg width="9" height="11" viewBox="0 0 9 11" style=""><path d="M4.5 10.5V1M1 4.4 4.5 1 8 4.4" fill="none" stroke="#9aa0a8" stroke-width="1.1"/></svg></div><div class="th l" style="left:472px">UID</div><div class="th" style="left:555px">用户名称</div><div class="th" style="left:851px">姓名</div><div class="th" style="left:948px">币名</div><div class="th" style="left:1037px">数量</div><div class="th" style="left:1281px">账户类型</div><div class="th" style="left:1414px">充值地址</div><div class="th l" style="left:1793px">Img1</div><div class="th" style="left:1902px">充值类型</div><div class="th" style="left:2010px">备注</div><div class="th" style="left:2077px">日期</div><div class="th" style="left:2340px">操作</div><div class="row" style="top:524.0px;height:65.6px"><div class="cb" style="left:14px;top:50%;margin-top:-8.5px"></div><div class="c" style="left:84px"><span style="letter-spacing:1.12px">130</span></div><div class="c" style="left:157.5px"><span style="letter-spacing:0.99px">7072</span></div><div class="c" style="left:240.5px"><span style="letter-spacing:0.32px">linyawen135@gmail.com</span></div><div class="c" style="left:537px">林雅雯</div><div class="c" style="left:634px"><span style="letter-spacing:-0.17px">USDT</span></div><div class="c" style="left:722.5px"><span style="letter-spacing:0.64px">100.00000000</span></div><div class="badge">账户资产</div><div class="c" style="left:1100px"><span style="letter-spacing:0.25px">TLDWyrDeN49Nh5HLkgUR...</span></div><div class="dd" style="left:1302px"><svg width="9" height="9" viewBox="0 0 9 9" style=""><path d="M.9 .8 4.5 4 8.1 .8M.9 4.6 4.5 7.8 8.1 4.6" fill="none" stroke="#5c6bc6" stroke-width="1.3"/></svg></div><div class="a" style="left:1479px;top:8px;width:39px;height:50px;border:1px solid #e1e6ef;border-radius:5px;background:#f0f3f9"></div>
<svg class="a" style="left:1483px;top:12px;overflow:hidden" width="31" height="41" viewBox="0 0 31 41">
<rect width="31" height="41" fill="#dcd9cf"/>
<rect x="0" y="0" width="16" height="16.5" fill="#7b4a1b"/><rect x="5" y="0" width="1" height="16" fill="#5e3510"/><rect x="10.5" y="0" width="1" height="16" fill="#5e3510"/><rect x="0" y="7.5" width="16" height="1" fill="#935f2a"/>
<rect x="16" y="0" width="15" height="18" fill="#e4e3de"/>
<path d="M20 12L27 2L26 9L30 8L24 14Z" fill="#5e8c3c"/><path d="M17 14L23 9L22 15Z" fill="#8fb06a"/>
<rect x="25" y="19" width="6" height="8" fill="#d98c86"/>
<path d="M22 30H31V41H20Z" fill="#1f1f22"/>
<ellipse cx="11.5" cy="28.5" rx="13.5" ry="12" fill="#e6b9a4"/>
<ellipse cx="11.5" cy="28.5" rx="11.6" ry="10.2" fill="#a8916c"/>
<ellipse cx="10" cy="27" rx="7" ry="5.5" fill="#c2ae8c"/>
<ellipse cx="13" cy="31" rx="4" ry="3" fill="#d2c3a4"/>
</svg><div class="c" style="left:1587px">在线</div><div class="c" style="left:1763px"><span style="letter-spacing:0.64px">2024-06-22 13:55:19</span></div><div class="act">审核</div></div><div class="row" style="top:600.0px;height:65.6px"><div class="cb" style="left:14px;top:50%;margin-top:-8.5px"></div><div class="c" style="left:84px"><span style="letter-spacing:1.64px">118</span></div><div class="c" style="left:157.5px"><span style="letter-spacing:0.99px">7059</span></div><div class="c" style="left:240.5px"><span style="letter-spacing:0.31px">123456@qq.com</span></div><div class="c" style="left:634px"><span style="letter-spacing:-0.17px">USDT</span></div><div class="c" style="left:722.5px"><span style="letter-spacing:0.64px">300.00000000</span></div><div class="badge">账户资产</div><div class="c" style="left:1100px"><span style="letter-spacing:0.25px">TLDWyrDeN49Nh5HLkgUR...</span></div><div class="dd" style="left:1302px"><svg width="9" height="9" viewBox="0 0 9 9" style=""><path d="M.9 .8 4.5 4 8.1 .8M.9 4.6 4.5 7.8 8.1 4.6" fill="none" stroke="#5c6bc6" stroke-width="1.3"/></svg></div><div class="a" style="left:1479px;top:8px;width:49px;height:50px;border:1px solid #e3e8f1;border-radius:6px;background:#eef1f8"></div>
<svg class="a" style="left:1480px;top:9px" width="47" height="48" viewBox="0 0 47 48">
<circle cx="23.6" cy="24.5" r="18" fill="#f4f1f1" stroke="#b3938a" stroke-width=".9"/>
<circle cx="23.6" cy="24.5" r="14.4" fill="none" stroke="#b99c92" stroke-width="2.2" stroke-dasharray="1.5 1.2" opacity=".55"/>
<circle cx="23.6" cy="24.5" r="10.6" fill="#b17c5f"/>
<path d="M23.6 30.5C21 27 16.5 26.5 15.8 22.5C18 21 21.5 21.5 23.6 25C25.7 21.5 29.2 21 31.4 22.5C30.7 26.5 26.2 27 23.6 30.5Z" fill="#fff"/>
<circle cx="23.6" cy="26.2" r=".6" fill="#b17c5f"/>
</svg><div class="c" style="left:1587px">在线</div><div class="c" style="left:1763px"><span style="letter-spacing:0.64px">2024-06-19 04:20:02</span></div><div class="act">审核</div></div><div class="row" style="top:677.1px;height:60.9px"><div class="cb" style="left:14px;top:50%;margin-top:-8.5px"></div><div class="c" style="left:84px"><span style="letter-spacing:1.64px">117</span></div><div class="c" style="left:157.5px"><span style="letter-spacing:0.99px">7059</span></div><div class="c" style="left:240.5px"><span style="letter-spacing:0.31px">123456@qq.com</span></div><div class="c" style="left:634px"><span style="letter-spacing:-0.17px">USDT</span></div><div class="c" style="left:722.5px"><span style="letter-spacing:0.64px">100.00000000</span></div><div class="badge">账户资产</div><div class="c" style="left:1100px"><span style="letter-spacing:0.25px">TLDWyrDeN49Nh5HLkgUR...</span></div><div class="dd" style="left:1302px"><svg width="9" height="9" viewBox="0 0 9 9" style=""><path d="M.9 .8 4.5 4 8.1 .8M.9 4.6 4.5 7.8 8.1 4.6" fill="none" stroke="#5c6bc6" stroke-width="1.3"/></svg></div><div class="c" style="left:1587px">在线</div><div class="c" style="left:1763px"><span style="letter-spacing:0.64px">2024-06-19 04:15:07</span></div><div class="act">审核</div></div><div class="row" style="top:749.43px;height:61.4px"><div class="cb" style="left:14px;top:50%;margin-top:-8.5px"></div><div class="c" style="left:84px"><span style="letter-spacing:1.23px">91</span></div><div class="c" style="left:157.5px"><span style="letter-spacing:0.99px">7037</span></div><div class="c" style="left:240.5px"><span style="letter-spacing:0.90px">234234</span></div><div class="c" style="left:634px"><span style="letter-spacing:-0.17px">USDT</span></div><div class="c" style="left:722.5px"><span style="letter-spacing:0.75px">11.00000000</span></div><div class="badge">账户资产</div><div class="c" style="left:1100px"><span style="letter-spacing:0.40px">0m79df69ccc45005765f...</span></div><div class="dd" style="left:1281px"><svg width="9" height="9" viewBox="0 0 9 9" style=""><path d="M.9 .8 4.5 4 8.1 .8M.9 4.6 4.5 7.8 8.1 4.6" fill="none" stroke="#5c6bc6" stroke-width="1.3"/></svg></div><div class="c" style="left:1587px">在线</div><div class="c" style="left:1763px"><span style="letter-spacing:0.64px">2022-10-28 15:18:19</span></div><div class="act">审核</div></div><div class="row" style="top:821.76px;height:61.4px"><div class="cb" style="left:14px;top:50%;margin-top:-8.5px"></div><div class="c" style="left:84px"><span style="letter-spacing:1.23px">90</span></div><div class="c" style="left:157.5px"><span style="letter-spacing:0.99px">7032</span></div><div class="c" style="left:240.5px"><span style="letter-spacing:0.85px">555666888</span></div><div class="c" style="left:634px"><span style="letter-spacing:-0.17px">USDT</span></div><div class="c" style="left:722.5px"><span style="letter-spacing:0.65px">30.00000000</span></div><div class="badge">账户资产</div><div class="c" style="left:1100px"><span style="letter-spacing:0.40px">0m79df69ccc45005765f...</span></div><div class="dd" style="left:1281px"><svg width="9" height="9" viewBox="0 0 9 9" style=""><path d="M.9 .8 4.5 4 8.1 .8M.9 4.6 4.5 7.8 8.1 4.6" fill="none" stroke="#5c6bc6" stroke-width="1.3"/></svg></div><div class="c" style="left:1587px">在线</div><div class="c" style="left:1763px"><span style="letter-spacing:0.64px">2022-10-02 15:28:20</span></div><div class="act">审核</div></div><div class="row" style="top:894.09px;height:61.4px"><div class="cb" style="left:14px;top:50%;margin-top:-8.5px"></div><div class="c" style="left:84px"><span style="letter-spacing:1.23px">89</span></div><div class="c" style="left:157.5px"><span style="letter-spacing:0.99px">7032</span></div><div class="c" style="left:240.5px"><span style="letter-spacing:0.85px">555666888</span></div><div class="c" style="left:634px"><span style="letter-spacing:-0.17px">USDT</span></div><div class="c" style="left:722.5px"><span style="letter-spacing:0.64px">400.00000000</span></div><div class="badge">账户资产</div><div class="c" style="left:1100px"><span style="letter-spacing:0.20px">TQ1zh2bj8apbT75Avz5s...</span></div><div class="dd" style="left:1281px"><svg width="9" height="9" viewBox="0 0 9 9" style=""><path d="M.9 .8 4.5 4 8.1 .8M.9 4.6 4.5 7.8 8.1 4.6" fill="none" stroke="#5c6bc6" stroke-width="1.3"/></svg></div><div class="c" style="left:1587px">在线</div><div class="c" style="left:1763px"><span style="letter-spacing:0.64px">2022-10-02 15:13:17</span></div><div class="act">审核</div></div><div class="row" style="top:966.42px;height:61.4px"><div class="cb" style="left:14px;top:50%;margin-top:-8.5px"></div><div class="c" style="left:84px"><span style="letter-spacing:1.23px">88</span></div><div class="c" style="left:157.5px"><span style="letter-spacing:0.99px">7032</span></div><div class="c" style="left:240.5px"><span style="letter-spacing:0.85px">555666888</span></div><div class="c" style="left:634px"><span style="letter-spacing:-0.17px">USDT</span></div><div class="c" style="left:722.5px"><span style="letter-spacing:0.64px">500.00000000</span></div><div class="badge">账户资产</div><div class="c" style="left:1100px"><span style="letter-spacing:0.20px">TQ1zh2bj8apbT75Avz5s...</span></div><div class="dd" style="left:1281px"><svg width="9" height="9" viewBox="0 0 9 9" style=""><path d="M.9 .8 4.5 4 8.1 .8M.9 4.6 4.5 7.8 8.1 4.6" fill="none" stroke="#5c6bc6" stroke-width="1.3"/></svg></div><div class="c" style="left:1587px">在线</div><div class="c" style="left:1763px"><span style="letter-spacing:0.64px">2022-10-02 15:13:08</span></div><div class="act">审核</div></div><div class="row" style="top:1038.75px;height:61.4px"><div class="cb" style="left:14px;top:50%;margin-top:-8.5px"></div><div class="c" style="left:84px"><span style="letter-spacing:1.23px">87</span></div><div class="c" style="left:157.5px"><span style="letter-spacing:0.99px">7032</span></div><div class="c" style="left:240.5px"><span style="letter-spacing:0.85px">555666888</span></div><div class="c" style="left:634px"><span style="letter-spacing:-0.17px">USDT</span></div><div class="c" style="left:722.5px"><span style="letter-spacing:0.64px">10000.00000000</span></div><div class="badge">账户资产</div><div class="c" style="left:1100px"><span style="letter-spacing:0.20px">TQ1zh2bj8apbT75Avz5s...</span></div><div class="dd" style="left:1281px"><svg width="9" height="9" viewBox="0 0 9 9" style=""><path d="M.9 .8 4.5 4 8.1 .8M.9 4.6 4.5 7.8 8.1 4.6" fill="none" stroke="#5c6bc6" stroke-width="1.3"/></svg></div><div class="c" style="left:1587px">在线</div><div class="c" style="left:1763px"><span style="letter-spacing:0.64px">2022-10-01 20:49:43</span></div><div class="act">审核</div></div><div class="row" style="top:1111.08px;height:61.4px"><div class="cb" style="left:14px;top:50%;margin-top:-8.5px"></div><div class="c" style="left:84px"><span style="letter-spacing:1.23px">69</span></div><div class="c" style="left:157.5px"><span style="letter-spacing:0.99px">7032</span></div><div class="c" style="left:240.5px"><span style="letter-spacing:0.85px">555666888</span></div><div class="c" style="left:634px"><span style="letter-spacing:-0.17px">USDT</span></div><div class="c" style="left:722.5px"><span style="letter-spacing:0.64px">20000.00000000</span></div><div class="badge">账户资产</div><div class="c" style="left:1100px"><span style="letter-spacing:0.06px">899AuTBFJWo1Rx1aoBxS...</span></div><div class="dd" style="left:1293px"><svg width="9" height="9" viewBox="0 0 9 9" style=""><path d="M.9 .8 4.5 4 8.1 .8M.9 4.6 4.5 7.8 8.1 4.6" fill="none" stroke="#5c6bc6" stroke-width="1.3"/></svg></div><div class="c" style="left:1587px">在线</div><div class="c" style="left:1763px"><span style="letter-spacing:0.64px">2022-09-13 16:09:44</span></div><div class="act">审核</div></div><div class="row" style="top:1183.41px;height:61.4px"><div class="cb" style="left:14px;top:50%;margin-top:-8.5px"></div><div class="c" style="left:84px"><span style="letter-spacing:1.23px">60</span></div><div class="c" style="left:157.5px"><span style="letter-spacing:0.99px">7032</span></div><div class="c" style="left:240.5px"><span style="letter-spacing:0.85px">555666888</span></div><div class="c" style="left:634px"><span style="letter-spacing:-0.17px">USDT</span></div><div class="c" style="left:722.5px"><span style="letter-spacing:0.63px">9999999.00000000</span></div><div class="badge">账户资产</div><div class="c" style="left:1100px"><span style="letter-spacing:-0.13px">123erceUfgccACYJaTx1...</span></div><div class="dd" style="left:1273px"><svg width="9" height="9" viewBox="0 0 9 9" style=""><path d="M.9 .8 4.5 4 8.1 .8M.9 4.6 4.5 7.8 8.1 4.6" fill="none" stroke="#5c6bc6" stroke-width="1.3"/></svg></div><div class="c" style="left:1587px">在线</div><div class="c" style="left:1763px"><span style="letter-spacing:0.64px">2022-08-03 20:41:40</span></div><div class="act">审核</div></div><div class="row" style="top:1255.8px;height:40px"></div>
<div id="sbtrack"></div><div id="sbthumb"></div>
</body>
</html>
